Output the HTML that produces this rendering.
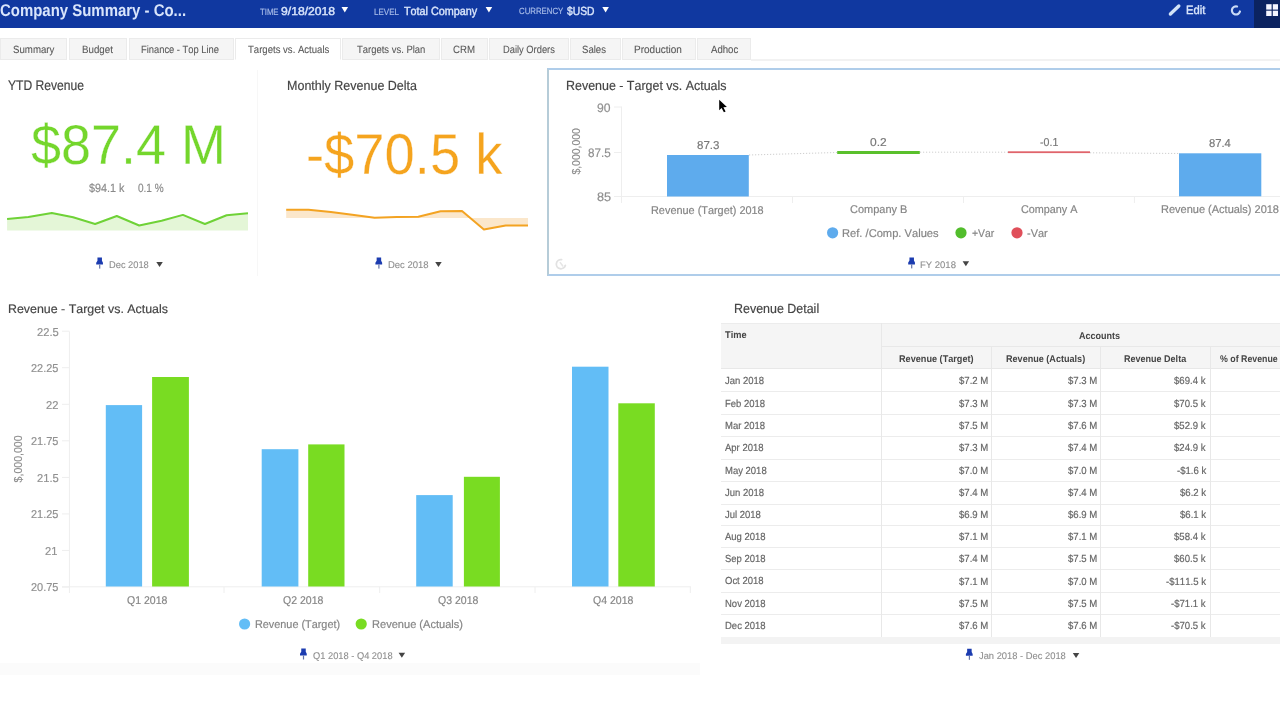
<!DOCTYPE html>
<html><head><meta charset="utf-8"><title>Company Summary</title>
<style>
html,body{margin:0;padding:0;background:#fff;}
body{width:1280px;height:720px;overflow:hidden;position:relative;font-family:"Liberation Sans",sans-serif;filter:blur(0.4px);}
.r{position:absolute;z-index:0;}
.t{position:absolute;z-index:2;white-space:pre;transform-origin:0 0;font-family:"Liberation Sans",sans-serif;text-rendering:geometricPrecision;font-kerning:none;font-feature-settings:"kern" 0;}
svg.g{position:absolute;left:0;top:0;z-index:1;}
</style></head><body>
<div class="r" style="left:0px;top:0px;width:1280px;height:28px;background:#1038a0;"></div>
<div class="r" style="left:1254px;top:0px;width:26px;height:28px;background:#0b2360;"></div>
<span class="t" id="t0" style="left:0.19px;top:2.00px;font-size:17.00px;line-height:17.00px;color:#d9e5fb;font-weight:bold;transform:scaleX(0.8792);">Company Summary - Co...</span>
<span class="t" id="t1" style="left:259.83px;top:8.00px;font-size:9.00px;line-height:9.00px;color:#a7bbe8;transform:scaleX(0.8609);-webkit-text-stroke:0.18px #a7bbe8;">TIME</span>
<span class="t" id="t2" style="left:281.43px;top:7.00px;font-size:11.50px;line-height:11.50px;color:#d9e5fb;transform:scaleX(1.0574);-webkit-text-stroke:0.4px #d9e5fb;">9/18/2018</span>
<span class="t" id="t3" style="left:374.34px;top:8.00px;font-size:9.00px;line-height:9.00px;color:#a7bbe8;transform:scaleX(0.8895);-webkit-text-stroke:0.18px #a7bbe8;">LEVEL</span>
<span class="t" id="t4" style="left:403.76px;top:6.00px;font-size:11.75px;line-height:11.75px;color:#d9e5fb;transform:scaleX(0.9195);-webkit-text-stroke:0.4px #d9e5fb;">Total Company</span>
<span class="t" id="t5" style="left:519.00px;top:7.00px;font-size:9.00px;line-height:9.00px;color:#a7bbe8;transform:scaleX(0.8680);-webkit-text-stroke:0.18px #a7bbe8;">CURRENCY</span>
<span class="t" id="t6" style="left:566.79px;top:6.00px;font-size:11.75px;line-height:11.75px;color:#d9e5fb;transform:scaleX(0.8759);-webkit-text-stroke:0.4px #d9e5fb;">$USD</span>
<span class="t" id="t7" style="left:1185.78px;top:4.00px;font-size:12.00px;line-height:12.00px;color:#d9e5fb;transform:scaleX(0.9334);-webkit-text-stroke:0.4px #d9e5fb;">Edit</span>
<div class="r" style="left:751px;top:59px;width:529px;height:1.5px;background:#f2f2f2;"></div>
<div class="r" style="left:0px;top:38px;width:67px;height:22px;background:#f5f5f5;box-sizing:border-box;border:1px solid #ebebeb;"></div>
<span class="t" id="t8" style="left:12.66px;top:45.00px;font-size:10.50px;line-height:10.50px;color:#5a5a5a;transform:scaleX(0.9207);-webkit-text-stroke:0.1px #5a5a5a;">Summary</span>
<div class="r" style="left:69px;top:38px;width:58px;height:22px;background:#f5f5f5;box-sizing:border-box;border:1px solid #ebebeb;"></div>
<span class="t" id="t9" style="left:82.20px;top:45.00px;font-size:10.50px;line-height:10.50px;color:#5a5a5a;transform:scaleX(0.9276);-webkit-text-stroke:0.1px #5a5a5a;">Budget</span>
<div class="r" style="left:129px;top:38px;width:105px;height:22px;background:#f5f5f5;box-sizing:border-box;border:1px solid #ebebeb;"></div>
<span class="t" id="t10" style="left:141.23px;top:45.00px;font-size:10.50px;line-height:10.50px;color:#5a5a5a;transform:scaleX(0.8902);-webkit-text-stroke:0.1px #5a5a5a;">Finance - Top Line</span>
<div class="r" style="left:235px;top:38px;width:106px;height:22px;background:#ffffff;box-sizing:border-box;border:1px solid #ebebeb;border-bottom-color:#fff;"></div>
<span class="t" id="t11" style="left:247.79px;top:45.00px;font-size:10.50px;line-height:10.50px;color:#5a5a5a;transform:scaleX(0.9107);-webkit-text-stroke:0.1px #5a5a5a;">Targets vs. Actuals</span>
<div class="r" style="left:342px;top:38px;width:98px;height:22px;background:#f5f5f5;box-sizing:border-box;border:1px solid #ebebeb;"></div>
<span class="t" id="t12" style="left:357.29px;top:45.00px;font-size:10.50px;line-height:10.50px;color:#5a5a5a;transform:scaleX(0.9007);-webkit-text-stroke:0.1px #5a5a5a;">Targets vs. Plan</span>
<div class="r" style="left:441px;top:38px;width:47px;height:22px;background:#f5f5f5;box-sizing:border-box;border:1px solid #ebebeb;"></div>
<span class="t" id="t13" style="left:453.21px;top:45.00px;font-size:10.50px;line-height:10.50px;color:#5a5a5a;transform:scaleX(0.9193);-webkit-text-stroke:0.1px #5a5a5a;">CRM</span>
<div class="r" style="left:489px;top:38px;width:80px;height:22px;background:#f5f5f5;box-sizing:border-box;border:1px solid #ebebeb;"></div>
<span class="t" id="t14" style="left:502.73px;top:45.00px;font-size:10.50px;line-height:10.50px;color:#5a5a5a;transform:scaleX(0.8896);-webkit-text-stroke:0.1px #5a5a5a;">Daily Orders</span>
<div class="r" style="left:570px;top:38px;width:51px;height:22px;background:#f5f5f5;box-sizing:border-box;border:1px solid #ebebeb;"></div>
<span class="t" id="t15" style="left:582.46px;top:45.00px;font-size:10.50px;line-height:10.50px;color:#5a5a5a;transform:scaleX(0.9131);-webkit-text-stroke:0.1px #5a5a5a;">Sales</span>
<div class="r" style="left:622px;top:38px;width:74px;height:22px;background:#f5f5f5;box-sizing:border-box;border:1px solid #ebebeb;"></div>
<span class="t" id="t16" style="left:634.18px;top:45.00px;font-size:10.50px;line-height:10.50px;color:#5a5a5a;transform:scaleX(0.9537);-webkit-text-stroke:0.1px #5a5a5a;">Production</span>
<div class="r" style="left:697px;top:38px;width:54px;height:22px;background:#f5f5f5;box-sizing:border-box;border:1px solid #ebebeb;"></div>
<span class="t" id="t17" style="left:710.58px;top:45.00px;font-size:10.50px;line-height:10.50px;color:#5a5a5a;transform:scaleX(0.9160);-webkit-text-stroke:0.1px #5a5a5a;">Adhoc</span>
<div class="r" style="left:257px;top:70px;width:1px;height:206px;background:#f7f7f7;"></div>
<div class="r" style="left:547px;top:68px;width:740px;height:208px;background:transparent;box-sizing:border-box;border:2px solid #afcdea;border-left-color:#b6ccd8;"></div>
<span class="t" id="t18" style="left:8.33px;top:78.00px;font-size:14.00px;line-height:14.00px;color:#444;transform:scaleX(0.8644);-webkit-text-stroke:0.18px #444;">YTD Revenue</span>
<span class="t" id="t19" style="left:30.62px;top:117.00px;font-size:56.00px;line-height:56.00px;color:#74d62c;transform:scaleX(0.9627);-webkit-text-stroke:0.3px #fff;">$87.4 M</span>
<span class="t" id="t20" style="left:89.48px;top:182.00px;font-size:12.00px;line-height:12.00px;color:#8a8a8a;transform:scaleX(0.8968);-webkit-text-stroke:0.18px #8a8a8a;">$94.1 k</span>
<span class="t" id="t21" style="left:138.21px;top:182.00px;font-size:12.00px;line-height:12.00px;color:#8a8a8a;transform:scaleX(0.8359);-webkit-text-stroke:0.18px #8a8a8a;">0.1 %</span>
<span class="t" id="t22" style="left:108.94px;top:261.00px;font-size:9.75px;line-height:9.75px;color:#8e8e8e;transform:scaleX(0.9528);-webkit-text-stroke:0.1px #8e8e8e;">Dec 2018</span>
<span class="t" id="t23" style="left:286.97px;top:79.00px;font-size:13.25px;line-height:13.25px;color:#444;transform:scaleX(0.9441);-webkit-text-stroke:0.18px #444;">Monthly Revenue Delta</span>
<span class="t" id="t24" style="left:305.98px;top:127.00px;font-size:57.50px;line-height:57.50px;color:#f5a41e;transform:scaleX(0.9455);-webkit-text-stroke:0.3px #fff;">-$70.5 k</span>
<span class="t" id="t25" style="left:387.62px;top:261.00px;font-size:9.75px;line-height:9.75px;color:#8e8e8e;transform:scaleX(0.9725);-webkit-text-stroke:0.1px #8e8e8e;">Dec 2018</span>
<span class="t" id="t26" style="left:566.48px;top:79.00px;font-size:13.25px;line-height:13.25px;color:#444;transform:scaleX(0.9392);-webkit-text-stroke:0.18px #444;">Revenue - Target vs. Actuals</span>
<span class="t" id="t27" style="left:596.93px;top:102.00px;font-size:12.25px;line-height:12.25px;color:#909090;transform:scaleX(0.9942);-webkit-text-stroke:0.18px #909090;">90</span>
<span class="t" id="t28" style="left:588.19px;top:147.00px;font-size:12.25px;line-height:12.25px;color:#909090;transform:scaleX(0.9520);-webkit-text-stroke:0.18px #909090;">87.5</span>
<span class="t" id="t29" style="left:596.85px;top:191.00px;font-size:12.25px;line-height:12.25px;color:#909090;transform:scaleX(1.0335);-webkit-text-stroke:0.18px #909090;">85</span>
<span class="t" id="t30" style="left:696.90px;top:141.00px;font-size:11.50px;line-height:11.50px;color:#777;transform:scaleX(1.0011);-webkit-text-stroke:0.18px #777;">87.3</span>
<span class="t" id="t31" style="left:870.23px;top:138.00px;font-size:11.50px;line-height:11.50px;color:#777;transform:scaleX(1.0429);-webkit-text-stroke:0.18px #777;">0.2</span>
<span class="t" id="t32" style="left:1039.83px;top:138.00px;font-size:11.50px;line-height:11.50px;color:#777;transform:scaleX(0.9230);-webkit-text-stroke:0.18px #777;">-0.1</span>
<span class="t" id="t33" style="left:1208.91px;top:139.00px;font-size:11.50px;line-height:11.50px;color:#777;transform:scaleX(0.9747);-webkit-text-stroke:0.18px #777;">87.4</span>
<span class="t" id="t34" style="left:650.81px;top:206.00px;font-size:11.25px;line-height:11.25px;color:#858585;transform:scaleX(0.9686);-webkit-text-stroke:0.18px #858585;">Revenue (Target) 2018</span>
<span class="t" id="t35" style="left:849.84px;top:205.00px;font-size:11.25px;line-height:11.25px;color:#858585;transform:scaleX(0.9755);-webkit-text-stroke:0.18px #858585;">Company B</span>
<span class="t" id="t36" style="left:1021.05px;top:205.00px;font-size:11.25px;line-height:11.25px;color:#858585;transform:scaleX(0.9608);-webkit-text-stroke:0.18px #858585;">Company A</span>
<span class="t" id="t37" style="left:1161.00px;top:205.00px;font-size:11.25px;line-height:11.25px;color:#858585;transform:scaleX(0.9775);-webkit-text-stroke:0.18px #858585;">Revenue (Actuals) 2018</span>
<span class="t" id="t38" style="left:842.39px;top:229.00px;font-size:11.25px;line-height:11.25px;color:#858585;transform:scaleX(0.9905);-webkit-text-stroke:0.18px #858585;">Ref. /Comp. Values</span>
<span class="t" id="t39" style="left:971.89px;top:229.00px;font-size:11.25px;line-height:11.25px;color:#858585;transform:scaleX(0.9254);-webkit-text-stroke:0.18px #858585;">+Var</span>
<span class="t" id="t40" style="left:1026.51px;top:229.00px;font-size:11.25px;line-height:11.25px;color:#858585;transform:scaleX(0.9725);-webkit-text-stroke:0.18px #858585;">-Var</span>
<span class="t" id="t41" style="left:920.47px;top:261.00px;font-size:9.50px;line-height:9.50px;color:#8e8e8e;transform:scaleX(1.0009);-webkit-text-stroke:0.1px #8e8e8e;">FY 2018</span>
<span class="t" id="t42" style="left:7.98px;top:303.00px;font-size:12.25px;line-height:12.25px;color:#444;transform:scaleX(1.0127);-webkit-text-stroke:0.18px #444;">Revenue - Target vs. Actuals</span>
<span class="t" id="t43" style="left:36.63px;top:328.00px;font-size:11.50px;line-height:11.50px;color:#909090;transform:scaleX(0.9715);-webkit-text-stroke:0.18px #909090;">22.5</span>
<span class="t" id="t44" style="left:30.97px;top:364.00px;font-size:11.50px;line-height:11.50px;color:#909090;transform:scaleX(0.9517);-webkit-text-stroke:0.18px #909090;">22.25</span>
<span class="t" id="t45" style="left:46.04px;top:401.00px;font-size:11.50px;line-height:11.50px;color:#909090;transform:scaleX(0.9715);-webkit-text-stroke:0.18px #909090;">22</span>
<span class="t" id="t46" style="left:30.97px;top:437.00px;font-size:11.50px;line-height:11.50px;color:#909090;transform:scaleX(0.9517);-webkit-text-stroke:0.18px #909090;">21.75</span>
<span class="t" id="t47" style="left:36.63px;top:474.00px;font-size:11.50px;line-height:11.50px;color:#909090;transform:scaleX(0.9715);-webkit-text-stroke:0.18px #909090;">21.5</span>
<span class="t" id="t48" style="left:30.97px;top:510.00px;font-size:11.50px;line-height:11.50px;color:#909090;transform:scaleX(0.9517);-webkit-text-stroke:0.18px #909090;">21.25</span>
<span class="t" id="t49" style="left:45.02px;top:547.00px;font-size:11.50px;line-height:11.50px;color:#909090;transform:scaleX(0.9715);-webkit-text-stroke:0.18px #909090;">21</span>
<span class="t" id="t50" style="left:30.97px;top:583.00px;font-size:11.50px;line-height:11.50px;color:#909090;transform:scaleX(0.9517);-webkit-text-stroke:0.18px #909090;">20.75</span>
<span class="t" id="t51" style="left:127.27px;top:596.00px;font-size:11.25px;line-height:11.25px;color:#858585;transform:scaleX(0.9341);-webkit-text-stroke:0.18px #858585;">Q1 2018</span>
<span class="t" id="t52" style="left:282.57px;top:596.00px;font-size:11.25px;line-height:11.25px;color:#858585;transform:scaleX(0.9341);-webkit-text-stroke:0.18px #858585;">Q2 2018</span>
<span class="t" id="t53" style="left:437.87px;top:596.00px;font-size:11.25px;line-height:11.25px;color:#858585;transform:scaleX(0.9341);-webkit-text-stroke:0.18px #858585;">Q3 2018</span>
<span class="t" id="t54" style="left:593.17px;top:596.00px;font-size:11.25px;line-height:11.25px;color:#858585;transform:scaleX(0.9341);-webkit-text-stroke:0.18px #858585;">Q4 2018</span>
<span class="t" id="t55" style="left:254.81px;top:620.00px;font-size:11.25px;line-height:11.25px;color:#858585;transform:scaleX(0.9648);-webkit-text-stroke:0.18px #858585;">Revenue (Target)</span>
<span class="t" id="t56" style="left:371.69px;top:620.00px;font-size:11.25px;line-height:11.25px;color:#858585;transform:scaleX(0.9833);-webkit-text-stroke:0.18px #858585;">Revenue (Actuals)</span>
<span class="t" id="t57" style="left:312.56px;top:652.00px;font-size:9.75px;line-height:9.75px;color:#8e8e8e;transform:scaleX(0.9529);-webkit-text-stroke:0.1px #8e8e8e;">Q1 2018 - Q4 2018</span>
<div class="r" style="left:0px;top:663px;width:700px;height:12px;background:#fbfbfb;"></div>
<span class="t" id="t58" style="left:734.08px;top:302.00px;font-size:13.25px;line-height:13.25px;color:#444;transform:scaleX(0.9399);-webkit-text-stroke:0.18px #444;">Revenue Detail</span>
<div class="r" style="left:721px;top:323px;width:559px;height:45.5px;background:#f5f5f5;"></div>
<div class="r" style="left:721px;top:322.5px;width:559px;height:1px;background:#ececec;"></div>
<div class="r" style="left:880.8px;top:346.3px;width:399.2px;height:1px;background:#e8e8e8;"></div>
<div class="r" style="left:721px;top:368.3px;width:559px;height:1px;background:#e8e8e8;"></div>
<span class="t" id="t59" style="left:725.40px;top:331.00px;font-size:9.75px;line-height:9.75px;color:#444;font-weight:bold;transform:scaleX(0.9456);">Time</span>
<span class="t" id="t60" style="left:1079.28px;top:332.00px;font-size:9.75px;line-height:9.75px;color:#444;font-weight:bold;transform:scaleX(0.9251);">Accounts</span>
<span class="t" id="t61" style="left:898.69px;top:355.00px;font-size:9.75px;line-height:9.75px;color:#444;font-weight:bold;transform:scaleX(0.9363);">Revenue (Target)</span>
<span class="t" id="t62" style="left:1005.99px;top:355.00px;font-size:9.75px;line-height:9.75px;color:#444;font-weight:bold;transform:scaleX(0.9306);">Revenue (Actuals)</span>
<span class="t" id="t63" style="left:1123.50px;top:355.00px;font-size:9.75px;line-height:9.75px;color:#444;font-weight:bold;transform:scaleX(0.9249);">Revenue Delta</span>
<span class="t" id="t64" style="left:1220.38px;top:355.00px;font-size:9.75px;line-height:9.75px;color:#444;font-weight:bold;transform:scaleX(0.9028);">% of Revenue</span>
<span class="t" id="t65" style="left:725.35px;top:377.00px;font-size:10.25px;line-height:10.25px;color:#666;transform:scaleX(0.9255);-webkit-text-stroke:0.18px #666;">Jan 2018</span>
<span class="t" id="t66" style="left:958.70px;top:377.00px;font-size:10.25px;line-height:10.25px;color:#666;transform:scaleX(0.9345);-webkit-text-stroke:0.18px #666;">$7.2 M</span>
<span class="t" id="t67" style="left:1067.50px;top:377.00px;font-size:10.25px;line-height:10.25px;color:#666;transform:scaleX(0.9345);-webkit-text-stroke:0.18px #666;">$7.3 M</span>
<span class="t" id="t68" style="left:1174.36px;top:377.00px;font-size:10.25px;line-height:10.25px;color:#666;transform:scaleX(0.9345);-webkit-text-stroke:0.18px #666;">$69.4 k</span>
<div class="r" style="left:721px;top:391px;width:559px;height:1px;background:#ececec;"></div>
<span class="t" id="t69" style="left:724.72px;top:400.00px;font-size:10.25px;line-height:10.25px;color:#666;transform:scaleX(0.9255);-webkit-text-stroke:0.18px #666;">Feb 2018</span>
<span class="t" id="t70" style="left:958.70px;top:400.00px;font-size:10.25px;line-height:10.25px;color:#666;transform:scaleX(0.9345);-webkit-text-stroke:0.18px #666;">$7.3 M</span>
<span class="t" id="t71" style="left:1067.50px;top:400.00px;font-size:10.25px;line-height:10.25px;color:#666;transform:scaleX(0.9345);-webkit-text-stroke:0.18px #666;">$7.3 M</span>
<span class="t" id="t72" style="left:1174.36px;top:400.00px;font-size:10.25px;line-height:10.25px;color:#666;transform:scaleX(0.9345);-webkit-text-stroke:0.18px #666;">$70.5 k</span>
<div class="r" style="left:721px;top:414px;width:559px;height:1px;background:#ececec;"></div>
<span class="t" id="t73" style="left:724.72px;top:422.00px;font-size:10.25px;line-height:10.25px;color:#666;transform:scaleX(0.9255);-webkit-text-stroke:0.18px #666;">Mar 2018</span>
<span class="t" id="t74" style="left:958.70px;top:422.00px;font-size:10.25px;line-height:10.25px;color:#666;transform:scaleX(0.9345);-webkit-text-stroke:0.18px #666;">$7.5 M</span>
<span class="t" id="t75" style="left:1067.50px;top:422.00px;font-size:10.25px;line-height:10.25px;color:#666;transform:scaleX(0.9345);-webkit-text-stroke:0.18px #666;">$7.6 M</span>
<span class="t" id="t76" style="left:1174.36px;top:422.00px;font-size:10.25px;line-height:10.25px;color:#666;transform:scaleX(0.9345);-webkit-text-stroke:0.18px #666;">$52.9 k</span>
<div class="r" style="left:721px;top:436px;width:559px;height:1px;background:#ececec;"></div>
<span class="t" id="t77" style="left:725.48px;top:444.00px;font-size:10.25px;line-height:10.25px;color:#666;transform:scaleX(0.9255);-webkit-text-stroke:0.18px #666;">Apr 2018</span>
<span class="t" id="t78" style="left:958.70px;top:444.00px;font-size:10.25px;line-height:10.25px;color:#666;transform:scaleX(0.9345);-webkit-text-stroke:0.18px #666;">$7.3 M</span>
<span class="t" id="t79" style="left:1067.50px;top:444.00px;font-size:10.25px;line-height:10.25px;color:#666;transform:scaleX(0.9345);-webkit-text-stroke:0.18px #666;">$7.4 M</span>
<span class="t" id="t80" style="left:1174.36px;top:444.00px;font-size:10.25px;line-height:10.25px;color:#666;transform:scaleX(0.9345);-webkit-text-stroke:0.18px #666;">$24.9 k</span>
<div class="r" style="left:721px;top:459px;width:559px;height:1px;background:#ececec;"></div>
<span class="t" id="t81" style="left:724.72px;top:467.00px;font-size:10.25px;line-height:10.25px;color:#666;transform:scaleX(0.9255);-webkit-text-stroke:0.18px #666;">May 2018</span>
<span class="t" id="t82" style="left:958.70px;top:467.00px;font-size:10.25px;line-height:10.25px;color:#666;transform:scaleX(0.9345);-webkit-text-stroke:0.18px #666;">$7.0 M</span>
<span class="t" id="t83" style="left:1067.50px;top:467.00px;font-size:10.25px;line-height:10.25px;color:#666;transform:scaleX(0.9345);-webkit-text-stroke:0.18px #666;">$7.0 M</span>
<span class="t" id="t84" style="left:1176.50px;top:467.00px;font-size:10.25px;line-height:10.25px;color:#666;transform:scaleX(0.9345);-webkit-text-stroke:0.18px #666;">-$1.6 k</span>
<div class="r" style="left:721px;top:481px;width:559px;height:1px;background:#ececec;"></div>
<span class="t" id="t85" style="left:725.35px;top:489.00px;font-size:10.25px;line-height:10.25px;color:#666;transform:scaleX(0.9255);-webkit-text-stroke:0.18px #666;">Jun 2018</span>
<span class="t" id="t86" style="left:958.70px;top:489.00px;font-size:10.25px;line-height:10.25px;color:#666;transform:scaleX(0.9345);-webkit-text-stroke:0.18px #666;">$7.4 M</span>
<span class="t" id="t87" style="left:1067.50px;top:489.00px;font-size:10.25px;line-height:10.25px;color:#666;transform:scaleX(0.9345);-webkit-text-stroke:0.18px #666;">$7.4 M</span>
<span class="t" id="t88" style="left:1179.69px;top:489.00px;font-size:10.25px;line-height:10.25px;color:#666;transform:scaleX(0.9345);-webkit-text-stroke:0.18px #666;">$6.2 k</span>
<div class="r" style="left:721px;top:504px;width:559px;height:1px;background:#ececec;"></div>
<span class="t" id="t89" style="left:725.35px;top:511.00px;font-size:10.25px;line-height:10.25px;color:#666;transform:scaleX(0.9255);-webkit-text-stroke:0.18px #666;">Jul 2018</span>
<span class="t" id="t90" style="left:958.70px;top:511.00px;font-size:10.25px;line-height:10.25px;color:#666;transform:scaleX(0.9345);-webkit-text-stroke:0.18px #666;">$6.9 M</span>
<span class="t" id="t91" style="left:1067.50px;top:511.00px;font-size:10.25px;line-height:10.25px;color:#666;transform:scaleX(0.9345);-webkit-text-stroke:0.18px #666;">$6.9 M</span>
<span class="t" id="t92" style="left:1179.69px;top:511.00px;font-size:10.25px;line-height:10.25px;color:#666;transform:scaleX(0.9345);-webkit-text-stroke:0.18px #666;">$6.1 k</span>
<div class="r" style="left:721px;top:525px;width:559px;height:1px;background:#ececec;"></div>
<span class="t" id="t93" style="left:725.48px;top:533.00px;font-size:10.25px;line-height:10.25px;color:#666;transform:scaleX(0.9255);-webkit-text-stroke:0.18px #666;">Aug 2018</span>
<span class="t" id="t94" style="left:958.70px;top:533.00px;font-size:10.25px;line-height:10.25px;color:#666;transform:scaleX(0.9345);-webkit-text-stroke:0.18px #666;">$7.1 M</span>
<span class="t" id="t95" style="left:1067.50px;top:533.00px;font-size:10.25px;line-height:10.25px;color:#666;transform:scaleX(0.9345);-webkit-text-stroke:0.18px #666;">$7.1 M</span>
<span class="t" id="t96" style="left:1174.36px;top:533.00px;font-size:10.25px;line-height:10.25px;color:#666;transform:scaleX(0.9345);-webkit-text-stroke:0.18px #666;">$58.4 k</span>
<div class="r" style="left:721px;top:547px;width:559px;height:1px;background:#ececec;"></div>
<span class="t" id="t97" style="left:725.07px;top:555.00px;font-size:10.25px;line-height:10.25px;color:#666;transform:scaleX(0.9255);-webkit-text-stroke:0.18px #666;">Sep 2018</span>
<span class="t" id="t98" style="left:958.70px;top:555.00px;font-size:10.25px;line-height:10.25px;color:#666;transform:scaleX(0.9345);-webkit-text-stroke:0.18px #666;">$7.4 M</span>
<span class="t" id="t99" style="left:1067.50px;top:555.00px;font-size:10.25px;line-height:10.25px;color:#666;transform:scaleX(0.9345);-webkit-text-stroke:0.18px #666;">$7.5 M</span>
<span class="t" id="t100" style="left:1174.36px;top:555.00px;font-size:10.25px;line-height:10.25px;color:#666;transform:scaleX(0.9345);-webkit-text-stroke:0.18px #666;">$60.5 k</span>
<div class="r" style="left:721px;top:569px;width:559px;height:1px;background:#ececec;"></div>
<span class="t" id="t101" style="left:725.05px;top:577.00px;font-size:10.25px;line-height:10.25px;color:#666;transform:scaleX(0.9255);-webkit-text-stroke:0.18px #666;">Oct 2018</span>
<span class="t" id="t102" style="left:958.70px;top:578.00px;font-size:10.25px;line-height:10.25px;color:#666;transform:scaleX(0.9345);-webkit-text-stroke:0.18px #666;">$7.1 M</span>
<span class="t" id="t103" style="left:1067.50px;top:578.00px;font-size:10.25px;line-height:10.25px;color:#666;transform:scaleX(0.9345);-webkit-text-stroke:0.18px #666;">$7.0 M</span>
<span class="t" id="t104" style="left:1165.85px;top:578.00px;font-size:10.25px;line-height:10.25px;color:#666;transform:scaleX(0.9345);-webkit-text-stroke:0.18px #666;">-$111.5 k</span>
<div class="r" style="left:721px;top:592px;width:559px;height:1px;background:#ececec;"></div>
<span class="t" id="t105" style="left:724.72px;top:600.00px;font-size:10.25px;line-height:10.25px;color:#666;transform:scaleX(0.9255);-webkit-text-stroke:0.18px #666;">Nov 2018</span>
<span class="t" id="t106" style="left:958.70px;top:600.00px;font-size:10.25px;line-height:10.25px;color:#666;transform:scaleX(0.9345);-webkit-text-stroke:0.18px #666;">$7.5 M</span>
<span class="t" id="t107" style="left:1067.50px;top:600.00px;font-size:10.25px;line-height:10.25px;color:#666;transform:scaleX(0.9345);-webkit-text-stroke:0.18px #666;">$7.5 M</span>
<span class="t" id="t108" style="left:1171.17px;top:600.00px;font-size:10.25px;line-height:10.25px;color:#666;transform:scaleX(0.9345);-webkit-text-stroke:0.18px #666;">-$71.1 k</span>
<div class="r" style="left:721px;top:614px;width:559px;height:1px;background:#ececec;"></div>
<span class="t" id="t109" style="left:724.72px;top:622.00px;font-size:10.25px;line-height:10.25px;color:#666;transform:scaleX(0.9255);-webkit-text-stroke:0.18px #666;">Dec 2018</span>
<span class="t" id="t110" style="left:958.70px;top:622.00px;font-size:10.25px;line-height:10.25px;color:#666;transform:scaleX(0.9345);-webkit-text-stroke:0.18px #666;">$7.6 M</span>
<span class="t" id="t111" style="left:1067.50px;top:622.00px;font-size:10.25px;line-height:10.25px;color:#666;transform:scaleX(0.9345);-webkit-text-stroke:0.18px #666;">$7.6 M</span>
<span class="t" id="t112" style="left:1171.17px;top:622.00px;font-size:10.25px;line-height:10.25px;color:#666;transform:scaleX(0.9345);-webkit-text-stroke:0.18px #666;">-$70.5 k</span>
<div class="r" style="left:880.8px;top:323px;width:1px;height:320px;background:#e8e8e8;"></div>
<div class="r" style="left:991.3px;top:346.3px;width:1px;height:296.7px;background:#e8e8e8;"></div>
<div class="r" style="left:1100.4px;top:346.3px;width:1px;height:296.7px;background:#e8e8e8;"></div>
<div class="r" style="left:1210px;top:346.3px;width:1px;height:296.7px;background:#e8e8e8;"></div>
<div class="r" style="left:721px;top:637.3px;width:559px;height:6.3px;background:#f3f3f3;"></div>
<span class="t" id="t113" style="left:979.35px;top:652.00px;font-size:9.75px;line-height:9.75px;color:#8e8e8e;transform:scaleX(0.9589);-webkit-text-stroke:0.1px #8e8e8e;">Jan 2018 - Dec 2018</span>
<svg class="g" width="1280" height="720" viewBox="0 0 1280 720">
<rect x="1266.2" y="4.2" width="5.4" height="5.4" fill="#f4f6ff"/>
<rect x="1272.8" y="4.2" width="5.2" height="5.4" fill="#f4f6ff"/>
<rect x="1266.2" y="10.7" width="5.4" height="5.3" fill="#f4f6ff"/>
<rect x="1272.8" y="10.7" width="5.2" height="5.3" fill="#f4f6ff"/>
<polygon points="7.1,219 28.4,217 51.8,212.9 73.1,217.3 95.1,224 116.8,216 139.2,225.5 161.6,220.8 182.9,214.9 204.9,224 226.6,215.3 248,213.3 248,230.5 7.1,230.5" fill="#e4f6d7"/>
<polyline points="7.1,219 28.4,217 51.8,212.9 73.1,217.3 95.1,224 116.8,216 139.2,225.5 161.6,220.8 182.9,214.9 204.9,224 226.6,215.3 248,213.3" fill="none" stroke="#6fd237" stroke-width="2" stroke-linejoin="round"/>
<g transform="translate(96.2,257.6)"><path d="M1.25,0 H5.75 V3.2 L6.75,5.2 V7 H0 V5.2 L1.25,3.2 Z" fill="#1c3cb0"/><rect x="2.9" y="7" width="1.2" height="4" fill="#6575a8"/></g>
<path d="M156.3,262 h6.5 l-3.25,5 z" fill="#444"/>
<polygon points="286.2,209.8 308.5,209.8 330.9,211.9 352.2,214.7 374.6,217.8 396.9,217 418.3,216.7 440.6,211.3 462,210.9 483.9,229.5 505.7,225.5 528,225.5 528,218 286.2,218" fill="#fbe7cb"/>
<polyline points="286.2,209.8 308.5,209.8 330.9,211.9 352.2,214.7 374.6,217.8 396.9,217 418.3,216.7 440.6,211.3 462,210.9 483.9,229.5 505.7,225.5 528,225.5" fill="none" stroke="#f3a322" stroke-width="2" stroke-linejoin="round"/>
<g transform="translate(375.4,257.6)"><path d="M1.25,0 H5.75 V3.2 L6.75,5.2 V7 H0 V5.2 L1.25,3.2 Z" fill="#1c3cb0"/><rect x="2.9" y="7" width="1.2" height="4" fill="#6575a8"/></g>
<path d="M435.2,262 h6.5 l-3.25,5 z" fill="#444"/>
<line x1="621.5" y1="106.5" x2="621.5" y2="203" stroke="#eeeeee" stroke-width="1"/>
<line x1="614" y1="107" x2="621.5" y2="107" stroke="#eeeeee" stroke-width="1"/>
<line x1="614" y1="152.5" x2="621.5" y2="152.5" stroke="#eeeeee" stroke-width="1"/>
<line x1="614" y1="196.5" x2="1280" y2="196.5" stroke="#eeeeee" stroke-width="1"/>
<line x1="792.5" y1="196.5" x2="792.5" y2="203" stroke="#eeeeee" stroke-width="1"/>
<line x1="963.5" y1="196.5" x2="963.5" y2="203" stroke="#eeeeee" stroke-width="1"/>
<line x1="1134.4" y1="196.5" x2="1134.4" y2="203" stroke="#eeeeee" stroke-width="1"/>
<rect x="667" y="155" width="81.8" height="41.5" fill="#5eabed"/>
<rect x="1179" y="153.3" width="82.3" height="43" fill="#5eabed"/>
<rect x="837.2" y="151" width="82.6" height="3" fill="#5ac02c"/>
<rect x="1008" y="151.3" width="82" height="1.8" fill="#e0646b"/>
<line x1="749" y1="155" x2="837" y2="152.5" stroke="#cfcfcf" stroke-width="1" stroke-dasharray="1.2,1.8"/>
<line x1="920" y1="152.2" x2="1008" y2="152.2" stroke="#cfcfcf" stroke-width="1" stroke-dasharray="1.2,1.8"/>
<line x1="1090" y1="152.8" x2="1179" y2="153.5" stroke="#cfcfcf" stroke-width="1" stroke-dasharray="1.2,1.8"/>
<circle cx="832.6" cy="232.8" r="5.6" fill="#5eabed"/>
<circle cx="961" cy="232.8" r="5.6" fill="#52bd2c"/>
<circle cx="1017" cy="232.8" r="5.6" fill="#e04f5a"/>
<g transform="translate(908.2,257.4)"><path d="M1.25,0 H5.75 V3.2 L6.75,5.2 V7 H0 V5.2 L1.25,3.2 Z" fill="#1c3cb0"/><rect x="2.9" y="7" width="1.2" height="4" fill="#6575a8"/></g>
<path d="M962.6,261.3 h6.5 l-3.25,5 z" fill="#444"/>
<path d="M561.6,259.6 A4.6,4.6 0 1 0 565.4,265.3" fill="none" stroke="#e2e2e2" stroke-width="1.8" stroke-linecap="round"/><path d="M560.3,262.6 L562.6,265.8" stroke="#e6e6e6" stroke-width="1.6" stroke-linecap="round"/>
<text transform="translate(580.4,151.35) rotate(-90)" text-anchor="middle" font-size="11.5" fill="#8c8c8c" textLength="46.5" lengthAdjust="spacingAndGlyphs" font-family="Liberation Sans" stroke="#8c8c8c" stroke-width="0.15">$,000,000</text>
<path d="M719.2,99.8 L719.2,110.2 L721.6,108 L723.9,112.2 L725.6,111.4 L723.4,107.3 L726.9,107 Z" fill="#000"/>
<line x1="1170.4" y1="14.0" x2="1178.8" y2="6.0" stroke="#d3e3f7" stroke-width="3.4" stroke-linecap="round"/>
<path d="M1237.06,6.44 A4.1,4.1 0 1 0 1239.96,11.46" fill="none" stroke="#c9daf6" stroke-width="2.2" stroke-linecap="round"/>
<path d="M341.5,7 h6.6 l-3.3,5.4 z" fill="#ffffff"/>
<path d="M485.6,7 h6.6 l-3.3,5.4 z" fill="#ffffff"/>
<path d="M602.3,7 h6.6 l-3.3,5.4 z" fill="#ffffff"/>
<line x1="62" y1="331.2" x2="69.5" y2="331.2" stroke="#eeeeee" stroke-width="1"/>
<line x1="62" y1="367.7" x2="69.5" y2="367.7" stroke="#eeeeee" stroke-width="1"/>
<line x1="62" y1="404.3" x2="69.5" y2="404.3" stroke="#eeeeee" stroke-width="1"/>
<line x1="62" y1="440.8" x2="69.5" y2="440.8" stroke="#eeeeee" stroke-width="1"/>
<line x1="62" y1="477.4" x2="69.5" y2="477.4" stroke="#eeeeee" stroke-width="1"/>
<line x1="62" y1="513.9" x2="69.5" y2="513.9" stroke="#eeeeee" stroke-width="1"/>
<line x1="62" y1="550.4" x2="69.5" y2="550.4" stroke="#eeeeee" stroke-width="1"/>
<line x1="62" y1="587.0" x2="69.5" y2="587.0" stroke="#eeeeee" stroke-width="1"/>
<line x1="69.4" y1="331.5" x2="69.4" y2="593" stroke="#eeeeee" stroke-width="1"/>
<line x1="62" y1="586.8" x2="691" y2="586.8" stroke="#eeeeee" stroke-width="1"/>
<line x1="224" y1="586.8" x2="224" y2="593" stroke="#eeeeee" stroke-width="1"/>
<line x1="379.7" y1="586.8" x2="379.7" y2="593" stroke="#eeeeee" stroke-width="1"/>
<line x1="535" y1="586.8" x2="535" y2="593" stroke="#eeeeee" stroke-width="1"/>
<line x1="690.3" y1="586.8" x2="690.3" y2="593" stroke="#eeeeee" stroke-width="1"/>
<rect x="105.8" y="405.1" width="36.30" height="181.40" fill="#62bdf6"/>
<rect x="152.1" y="377.0" width="36.80" height="209.50" fill="#79dc22"/>
<rect x="261.7" y="449.2" width="36.70" height="137.30" fill="#62bdf6"/>
<rect x="308.2" y="444.4" width="36.30" height="142.10" fill="#79dc22"/>
<rect x="416.2" y="495.1" width="36.50" height="91.40" fill="#62bdf6"/>
<rect x="463.9" y="476.8" width="36.00" height="109.70" fill="#79dc22"/>
<rect x="572" y="366.7" width="36.50" height="219.80" fill="#62bdf6"/>
<rect x="618.3" y="403.3" width="36.50" height="183.20" fill="#79dc22"/>
<text transform="translate(21.8,458.9) rotate(-90)" text-anchor="middle" font-size="11.3" fill="#8c8c8c" textLength="47" lengthAdjust="spacingAndGlyphs" font-family="Liberation Sans" stroke="#8c8c8c" stroke-width="0.15">$,000,000</text>
<circle cx="244.6" cy="624" r="5.6" fill="#62bdf6"/>
<circle cx="361.2" cy="624" r="5.6" fill="#79dc22"/>
<g transform="translate(300,648.5)"><path d="M1.25,0 H5.75 V3.2 L6.75,5.2 V7 H0 V5.2 L1.25,3.2 Z" fill="#1c3cb0"/><rect x="2.9" y="7" width="1.2" height="4" fill="#6575a8"/></g>
<path d="M398.6,652.8 h6.5 l-3.25,5 z" fill="#444"/>
<g transform="translate(965.9,648.8)"><path d="M1.25,0 H5.75 V3.2 L6.75,5.2 V7 H0 V5.2 L1.25,3.2 Z" fill="#1c3cb0"/><rect x="2.9" y="7" width="1.2" height="4" fill="#6575a8"/></g>
<path d="M1072.8,653 h6.5 l-3.25,5 z" fill="#444"/>
</svg>
</body></html>
